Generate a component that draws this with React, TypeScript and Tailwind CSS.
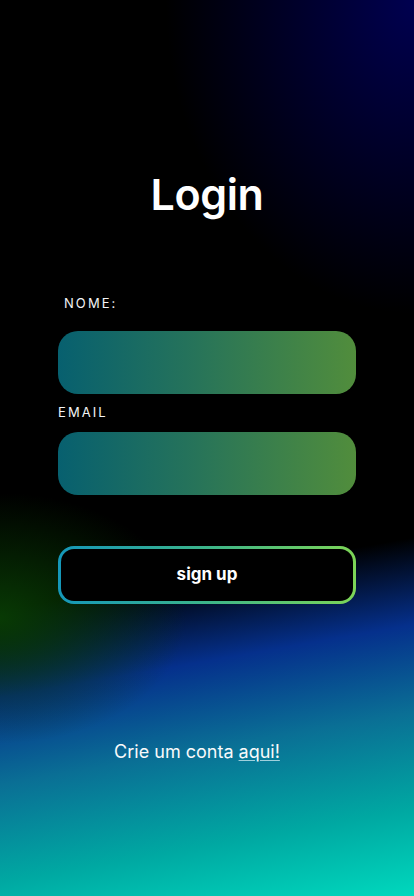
export default function App() {
  return (
    <main className="min-h-[896px] w-full bg-black bg-[radial-gradient(ellipse_60%_35%_at_100%_0%,#000050_0%,transparent_100%),radial-gradient(ellipse_45%_14%_at_0%_69%,#083a04_0%,transparent_100%),linear-gradient(170deg,#000_0%,#000_63%,#05308c_72%,#0a6f95_81%,#00a8a2_91%,#00d8bd_100%)] font-['Inter',sans-serif] text-white">
      <div className="mx-auto flex w-[298px] flex-col pt-[168px]">
        <h1 className="text-center text-[43px] font-semibold leading-[52px] tracking-[-0.01em]">
          Login
        </h1>

        <label className="mt-[75px] pl-[6px] text-[13px] leading-[16px] tracking-[0.16em] text-gray-100">
          NOME:
        </label>
        <input
          type="text"
          className="mt-[20px] h-[63px] w-full rounded-[20px] bg-[linear-gradient(90deg,#07606f_0%,#26735a_45%,#518d3c_100%)] px-5 text-white outline-none"
        />

        <label className="mt-[10px] text-[13px] leading-[16px] tracking-[0.16em] text-gray-100">
          EMAIL
        </label>
        <input
          type="email"
          className="mt-[12px] h-[63px] w-full rounded-[20px] bg-[linear-gradient(90deg,#07606f_0%,#26735a_45%,#518d3c_100%)] px-5 text-white outline-none"
        />

        <div className="mt-[51px] rounded-[16px] bg-[linear-gradient(90deg,#1597b9_0%,#3cb58a_50%,#7dd657_100%)] p-[3px]">
          <button className="flex h-[52px] w-full items-center justify-center rounded-[13px] bg-black text-[17px] font-bold">
            sign up
          </button>
        </div>

        <p className="mt-[136px] pr-[20px] text-center text-[18px] leading-[24px] text-gray-50">
          Crie um conta{' '}
          <a href="#" className="underline decoration-[#9fd0dc] underline-offset-2">
            aqui!
          </a>
        </p>
      </div>
    </main>
  );
}
